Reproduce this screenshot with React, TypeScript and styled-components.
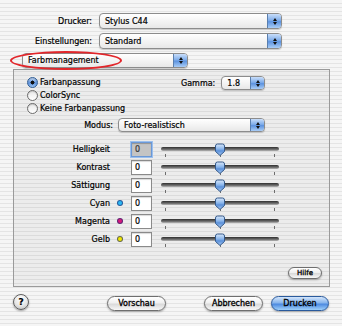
import React from 'react';
import styled, { createGlobalStyle } from 'styled-components';

const GlobalStyle = createGlobalStyle`
  html, body { margin: 0; padding: 0; }
  body {
    font-family: "DejaVu Sans", Verdana, sans-serif;
    font-size: 8px;
    color: #000;
    -webkit-text-stroke: 0.2px #000;
  }
`;

const stripes = (a: string, b: string) =>
  `repeating-linear-gradient(to bottom, ${a} 0px, ${a} 3px, ${b} 3px, ${b} 4px)`;

const Window = styled.div`
  position: relative;
  width: 342px;
  height: 326px;
  box-sizing: border-box;
  padding-top: 13px;
  background: ${stripes('#f5f5f5', '#e4e4e4')};
  overflow: hidden;
`;

const FieldRow = styled.div<{ $labelWidth: number; $gap: number }>`
  display: flex;
  align-items: center;
  margin-bottom: 4px;
  & > label {
    width: ${p => p.$labelWidth}px;
    margin-right: ${p => p.$gap}px;
    text-align: right;
    flex-shrink: 0;
  }
`;

const PopupBox = styled.div<{ $w: number; $h: number }>`
  display: flex;
  width: ${p => p.$w}px;
  height: ${p => p.$h}px;
  box-sizing: border-box;
  border: 1px solid #8c8c8c;
  border-radius: 4px;
  background: linear-gradient(to bottom, #ffffff 0%, #f4f4f4 50%, #e8e8e8 100%);
  box-shadow: 0 1px 1px rgba(0, 0, 0, 0.18);
  overflow: hidden;
  flex-shrink: 0;
`;

const PopupText = styled.span`
  flex: 1;
  padding-left: 5px;
  display: flex;
  align-items: center;
  white-space: nowrap;
`;

const PopupArrows = styled.span`
  width: 13px;
  display: flex;
  flex-direction: column;
  align-items: center;
  justify-content: center;
  gap: 1px;
  border-left: 1px solid #5a7fae;
  background: linear-gradient(to bottom, #c9defa 0%, #7fadea 45%, #5d93df 55%, #a9cdf7 100%);
  &::before, &::after {
    content: '';
    width: 0;
    height: 0;
    border-left: 2.5px solid transparent;
    border-right: 2.5px solid transparent;
  }
  &::before { border-bottom: 3px solid #111; }
  &::after { border-top: 3px solid #111; }
`;

const Popup = ({ value, w, h }: { value: string; w: number; h: number }) => (
  <PopupBox $w={w} $h={h}>
    <PopupText>{value}</PopupText>
    <PopupArrows />
  </PopupBox>
);

const PanelRow = styled.div`
  position: relative;
  padding-left: 22px;
  margin-top: 3px;
`;

const Ellipse = styled.div`
  position: absolute;
  left: 10px;
  top: -2px;
  width: 112px;
  height: 19px;
  box-sizing: border-box;
  border: 2px solid #e2262b;
  border-radius: 50%;
  pointer-events: none;
`;

const GroupBox = styled.div`
  margin: 1px 0 0 13px;
  width: 317px;
  height: 218px;
  box-sizing: border-box;
  border: 1px solid #9a9a9a;
  background: rgba(0, 0, 0, 0.035);
  padding: 6px 0 0 0;
  display: flex;
  flex-direction: column;
`;

const TopSection = styled.div`
  display: flex;
  align-items: flex-start;
  padding-left: 13px;
`;

const RadioList = styled.div`
  width: 154px;
  display: flex;
  flex-direction: column;
`;

const RadioRow = styled.div`
  display: flex;
  align-items: center;
  height: 13px;
  gap: 2px;
`;

const RadioDot = styled.span<{ $on?: boolean }>`
  width: 11px;
  height: 11px;
  box-sizing: border-box;
  border-radius: 50%;
  border: 1px solid ${p => (p.$on ? '#2f5d96' : '#6c6c6c')};
  background: ${p =>
    p.$on
      ? 'radial-gradient(circle at 50% 50%, #111 0 1.8px, transparent 2.2px), linear-gradient(to bottom, #c7dcf8, #5d92dc 55%, #9fc6f3)'
      : 'linear-gradient(to bottom, #e8e8e8, #ffffff)'};
  box-shadow: inset 0 1px 1px rgba(0, 0, 0, 0.15);
  flex-shrink: 0;
`;

const GammaGroup = styled.div`
  display: flex;
  align-items: center;
  gap: 6px;
`;

const ModeRow = styled.div`
  display: flex;
  align-items: center;
  margin-top: 3px;
  & > label {
    width: 99px;
    margin-right: 5px;
    text-align: right;
  }
`;

const Sliders = styled.div`
  margin-top: 8px;
  display: flex;
  flex-direction: column;
`;

const SliderRow = styled.div`
  display: flex;
  align-items: center;
  height: 18px;
  & > label {
    width: 96px;
    text-align: right;
  }
`;

const DotCell = styled.span`
  width: 21px;
  display: flex;
  align-items: center;
  padding-left: 7px;
  box-sizing: border-box;
`;

const ColorDot = styled.span<{ $color: string }>`
  width: 6px;
  height: 6px;
  box-sizing: border-box;
  border-radius: 50%;
  background: ${p => p.$color};
  border: 1px solid rgba(30, 40, 110, 0.65);
`;

const NumberField = styled.div<{ $focused?: boolean }>`
  width: 21px;
  height: 15px;
  box-sizing: border-box;
  padding-left: 3px;
  display: flex;
  align-items: center;
  border: 1px solid ${p => (p.$focused ? '#6b98d6' : '#8a8a8a')};
  background: ${p => (p.$focused ? '#c4c4c4' : '#ffffff')};
  box-shadow: ${p =>
    p.$focused ? '0 0 0 1px #9cc0ee, inset 0 1px 1px rgba(0,0,0,0.25)' : 'inset 0 1px 1px rgba(0,0,0,0.15)'};
  color: ${p => (p.$focused ? '#555' : '#000')};
`;

const SliderBody = styled.div`
  position: relative;
  width: 118px;
  height: 18px;
  margin-left: 9px;
`;

const Track = styled.div`
  position: absolute;
  left: 0;
  right: 0;
  top: 7px;
  height: 4px;
  border-radius: 2px;
  background: linear-gradient(to bottom, #2e2e2e, #6e6e6e 60%, #b8b8b8);
`;

const Tick = styled.span<{ $x: number }>`
  position: absolute;
  top: 14px;
  left: ${p => p.$x}px;
  width: 1px;
  height: 3px;
  background: #6d6d6d;
`;

const Thumb = styled.svg`
  position: absolute;
  left: 53px;
  top: 3px;
`;

const Slider = () => (
  <SliderBody>
    <Track />
    <Tick $x={4} />
    <Tick $x={59} />
    <Tick $x={113} />
    <Thumb width="12" height="14" viewBox="0 0 12 14">
      <defs>
        <linearGradient id="thumbFill" x1="0" y1="0" x2="0" y2="1">
          <stop offset="0" stopColor="#d9e8fb" />
          <stop offset="0.45" stopColor="#86b3ea" />
          <stop offset="0.6" stopColor="#5a8fd8" />
          <stop offset="1" stopColor="#a8cbf5" />
        </linearGradient>
      </defs>
      <path
        d="M1.5 3 Q1.5 1 3.5 1 H8.5 Q10.5 1 10.5 3 V8.5 L6 12.5 L1.5 8.5 Z"
        fill="url(#thumbFill)"
        stroke="#34598a"
        strokeWidth="1"
      />
    </Thumb>
  </SliderBody>
);

const HelpRow = styled.div`
  display: flex;
  justify-content: flex-end;
  padding-right: 7px;
  margin-top: 19px;
`;

const PillButton = styled.button<{ $w: number; $h: number; $ml?: number; $primary?: boolean; $small?: boolean }>`
  width: ${p => p.$w}px;
  height: ${p => p.$h}px;
  margin-left: ${p => p.$ml ?? 0}px;
  padding: 0;
  font-family: inherit;
  font-size: ${p => (p.$small ? 7 : 8)}px;
  color: #000;
  border-radius: ${p => p.$h / 2}px;
  border: 1px solid ${p => (p.$primary ? '#2a5a9c' : '#6e6e6e')};
  background: ${p =>
    p.$primary
      ? 'linear-gradient(to bottom, #d3e5fb 0%, #86b4ec 45%, #4d8ae0 55%, #9fd0fa 100%)'
      : 'linear-gradient(to bottom, #ffffff 0%, #f0f0f0 45%, #dadada 55%, #f7f7f7 100%)'};
  box-shadow: 0 1px 2px rgba(0, 0, 0, 0.3);
  -webkit-text-stroke: 0.3px #000;
  flex-shrink: 0;
`;

const BottomBar = styled.div`
  display: flex;
  align-items: center;
  margin-top: 9px;
  padding-left: 13px;
`;

const HelpCircle = styled.span`
  width: 16px;
  height: 16px;
  box-sizing: border-box;
  border-radius: 50%;
  border: 1px solid #5e5e5e;
  background: radial-gradient(circle at 50% 30%, #ffffff 0%, #e6e6e6 55%, #b5b5b5 100%);
  box-shadow: 0 1px 2px rgba(0, 0, 0, 0.35);
  display: flex;
  align-items: center;
  justify-content: center;
  font-weight: bold;
  font-size: 9px;
  margin-top: -3px;
`;

const sliders = [
  { label: 'Helligkeit', focused: true },
  { label: 'Kontrast' },
  { label: 'Sättigung' },
  { label: 'Cyan', color: '#2bb8f4' },
  { label: 'Magenta', color: '#d81a7c' },
  { label: 'Gelb', color: '#efe600' },
];

export default function App() {
  return (
    <Window>
      <GlobalStyle />
      <FieldRow $labelWidth={92} $gap={7}>
        <label>Drucker:</label>
        <Popup value="Stylus C44" w={183} h={16} />
      </FieldRow>
      <FieldRow $labelWidth={92} $gap={7}>
        <label>Einstellungen:</label>
        <Popup value="Standard" w={183} h={16} />
      </FieldRow>
      <PanelRow>
        <Popup value="Farbmanagement" w={166} h={15} />
        <Ellipse />
      </PanelRow>
      <GroupBox>
        <TopSection>
          <RadioList>
            <RadioRow><RadioDot $on />Farbanpassung</RadioRow>
            <RadioRow><RadioDot />ColorSync</RadioRow>
            <RadioRow><RadioDot />Keine Farbanpassung</RadioRow>
          </RadioList>
          <GammaGroup>
            <label>Gamma:</label>
            <Popup value="1.8" w={44} h={14} />
          </GammaGroup>
        </TopSection>
        <ModeRow>
          <label>Modus:</label>
          <Popup value="Foto-realistisch" w={147} h={14} />
        </ModeRow>
        <Sliders>
          {sliders.map(s => (
            <SliderRow key={s.label}>
              <label>{s.label}</label>
              <DotCell>{s.color ? <ColorDot $color={s.color} /> : null}</DotCell>
              <NumberField $focused={s.focused}>0</NumberField>
              <Slider />
            </SliderRow>
          ))}
        </Sliders>
        <HelpRow>
          <PillButton $w={34} $h={12} $small>Hilfe</PillButton>
        </HelpRow>
      </GroupBox>
      <BottomBar>
        <HelpCircle>?</HelpCircle>
        <PillButton $w={59} $h={15} $ml={78}>Vorschau</PillButton>
        <PillButton $w={59} $h={15} $ml={38}>Abbrechen</PillButton>
        <PillButton $w={58} $h={15} $ml={8} $primary>Drucken</PillButton>
      </BottomBar>
    </Window>
  );
}
